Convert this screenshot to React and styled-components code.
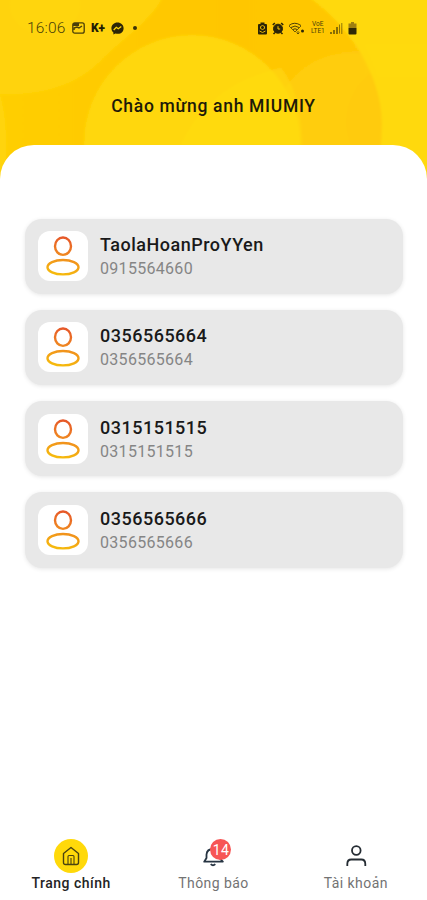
import React from "react";
import styled, { createGlobalStyle } from "styled-components";

const GlobalStyle = createGlobalStyle`
  * {
    box-sizing: border-box;
  }
  body {
    margin: 0;
    background-color: #fff;
    font-family: Roboto, "Noto Sans", sans-serif;
  }
`;
const Container = styled.div`
  display: flex;
  flex-direction: column;
  height: 900px;
  overflow: hidden;
  background-color: #fff;
`;
const Header = styled.header`
  position: relative;
  flex: none;
  height: 180px;
  background-color: #ffd90a;
`;
const Backdrop = styled.svg`
  position: absolute;
  inset: 0;
`;
const StatusBar = styled.div`
  position: relative;
  display: flex;
  align-items: center;
  justify-content: space-between;
  height: 56px;
  padding: 0 70px 0 27px;
  color: #4a3f08;
`;
const StatusGroup = styled.div`
  display: flex;
  align-items: center;
  gap: ${(props) => props.$gap}px;
`;
const Time = styled.span`
  width: 39px;
  font-size: 15.5px;
  font-weight: 300;
  letter-spacing: 0.2px;
  white-space: nowrap;
`;
const Carrier = styled.span`
  width: 14px;
  font-size: 12px;
  font-weight: 900;
  line-height: 12px;
  letter-spacing: -0.2px;
  color: #211c05;
`;
const Dot = styled.span`
  width: 4px;
  height: 4px;
  margin-left: 3px;
  border-radius: 50%;
  background-color: #3b3308;
`;
const Network = styled.span`
  display: flex;
  flex-direction: column;
  align-items: center;
  width: 16px;
  font-size: 6.5px;
  font-weight: 400;
  line-height: 7px;
`;
const Welcome = styled.h1`
  position: relative;
  margin: 38px 0 0;
  font-size: 17.5px;
  font-weight: 500;
  line-height: 24px;
  letter-spacing: 0.7px;
  text-align: center;
  color: #1d1a08;
`;
const Sheet = styled.main`
  position: relative;
  flex: 1;
  margin-top: -35px;
  padding: 73.5px 24px 0 25px;
  border-radius: 34px 34px 0 0;
  background-color: #fff;
`;
const List = styled.div`
  display: flex;
  flex-direction: column;
  gap: 16px;
`;
const Card = styled.div`
  display: flex;
  align-items: center;
  gap: 12px;
  height: 75.3px;
  padding: 0 13px;
  border-radius: 17px;
  background-color: #e8e8e8;
  box-shadow: 0 1px 4px rgba(0, 0, 0, 0.1);
`;
const Avatar = styled.div`
  width: 50px;
  height: 50px;
  border-radius: 12px;
  background-color: #fff;
`;
const Details = styled.div`
  padding-top: 1px;
`;
const Name = styled.div`
  font-size: 18px;
  font-weight: 500;
  line-height: 24px;
  letter-spacing: 0.5px;
  color: #191919;
`;
const Phone = styled.div`
  font-size: 16px;
  line-height: 23px;
  letter-spacing: 0.3px;
  color: #858585;
`;
const TabBar = styled.nav`
  display: flex;
  flex: none;
  height: 63px;
`;
const Tab = styled.div`
  flex: 1;
  display: flex;
  flex-direction: column;
  align-items: center;
  font-size: 14px;
  font-weight: ${(props) => (props.$active ? 500 : 400)};
  line-height: 20px;
  letter-spacing: ${(props) => (props.$active ? 0.5 : 0.45)}px;
  color: ${(props) => (props.$active ? "#242424" : "#737373")};
`;
const TabIcon = styled.div`
  position: relative;
  display: flex;
  align-items: center;
  justify-content: center;
  width: 34px;
  height: 34px;
  margin-top: 2px;
  border-radius: 50%;
  background-color: ${(props) => (props.$active ? "#ffd90a" : "transparent")};
`;
const Badge = styled.span`
  position: absolute;
  top: 0;
  right: -1px;
  width: 21px;
  height: 21px;
  border-radius: 50%;
  background-color: #f75555;
  color: #fff;
  font-size: 14px;
  line-height: 22px;
  letter-spacing: 0.3px;
  text-align: center;
`;

const Bubbles = () => (
  <Backdrop width="427" height="180" viewBox="0 0 427 180">
    <defs>
      <linearGradient id="warm" x1="0" y1="0" x2="1" y2="0">
        <stop offset="0" stopColor="#ffcf05" />
        <stop offset="0.6" stopColor="#ffc605" />
        <stop offset="1" stopColor="#ffc807" />
      </linearGradient>
      <filter id="soft" x="-10%" y="-10%" width="120%" height="120%">
        <feGaussianBlur stdDeviation="1.2" />
      </filter>
    </defs>
    <g filter="url(#soft)">
      <path d="M-10-10H298C345 18 382 72 382 124Q382 155 373 190H-10Z" fill="url(#warm)" />
      <path d="M-10-10H166C155 20 125 36 100 62C72 89 35 97-10 94Z" fill="#ffd307" />
      <ellipse cx="45" cy="5" rx="35" ry="29" fill="#ffd90a" opacity="0.4" />
      <path d="M-10 70Q14 110 3 190H-10Z" fill="#ffd90a" opacity="0.5" />
      <circle cx="350" cy="130" r="77" fill="#ffd60d" opacity="0.4" />
      <circle cx="408" cy="122" r="62" fill="#ffc708" opacity="0.4" />
      <circle cx="192" cy="143" r="108" fill="#ffd708" />
      <path d="M180 145Q210 82 281 68Q301 92 302 145Z" fill="#ffdd12" opacity="0.5" />
      <path d="M437-10H298C345 18 382 72 382 124Q382 155 373 190H437Z" fill="#ffd90a" />
      <path d="M365 45H437V76H378Q373 59 365 45Z" fill="#ffdf12" opacity="0.3" />
    </g>
  </Backdrop>
);

const PictureIcon = () => (
  <svg width="13" height="12" viewBox="0 0 13 12" fill="none" stroke="currentColor">
    <rect x="0.8" y="0.8" width="11.4" height="10.4" rx="2" strokeWidth="1.3" />
    <path d="M2 8V6l3-1 2 1 3-2" strokeWidth="1.5" />
    <path d="M1 1h6v3H1z" fill="currentColor" stroke="none" />
  </svg>
);

const MessengerIcon = () => (
  <svg width="13" height="13" viewBox="0 0 13 13">
    <path d="M6.5.5C3 .5.4 3 .4 6.2c0 1.8.8 3.3 2 4.3v2l2-1c5 1.4 8.2-1.6 8.2-5.3C12.6 3 10 .5 6.5.5Z" fill="#2c2507" />
    <path d="m2.7 8 2.6-2.7 2 1.5 3-2.2" fill="none" stroke="#ffd60a" strokeWidth="1.3" />
  </svg>
);

const SaverIcon = () => (
  <svg width="9" height="13" viewBox="0 0 9 13">
    <path d="M2.5.5h4V2H8q1 0 1 1v8.5q0 1-1 1H1q-1 0-1-1V3q0-1 1-1h1.5z" fill="#2c2507" />
    <path d="M2.5 4.5q2-2 4 0v2q-2 2-4 0ZM1.5 9l3 1.5 3-1.5" fill="none" stroke="#e5b307" />
  </svg>
);

const AlarmIcon = () => (
  <svg width="12" height="13" viewBox="0 0 12 13" fill="none" stroke="#2c2507">
    <circle cx="6" cy="6.7" r="4.5" fill="#2c2507" />
    <path d="m.8 3 2-2m6.4 0 2 2M1.5 12l1.5-1.5m7.5 1.500L9 10.500" strokeWidth="1.6" />
    <path d="M6 4.2V7h2.2" stroke="#ffca07" />
  </svg>
);

const WifiIcon = () => (
  <svg width="17" height="13" viewBox="0 0 17 13" fill="none" stroke="currentColor">
    <path d="M1 3.5q5.5-4.5 12 0M3 5.5q4-3 8 0M5 7.5q2-1.5 4 0" />
    <path d="m1 4 6 6 6-6M10 9v3m-1.5-1.5L10 12l1.5-1.5" strokeWidth="0.8" />
    <circle cx="14.5" cy="9" r="1.5" fill="#2c2507" stroke="none" />
  </svg>
);

const SignalIcon = () => (
  <svg width="13" height="12" viewBox="0 0 13 12" fill="none" stroke="currentColor">
    <path d="M1 10v2M4 8v4M7 5v7" strokeWidth="1.3" />
    <path d="M9.5 2.5v9M11.8 1v11" strokeWidth="0.9" opacity="0.7" />
  </svg>
);

const BatteryIcon = () => (
  <svg width="9" height="13" viewBox="0 0 9 13">
    <path d="M3 0h3v1.5h2.5V6h-8V1.5H3z" fill="#a08010" />
    <path d="M.5 6h8v5.5q0 1-1 1h-6q-1 0-1-1z" fill="#302907" />
  </svg>
);

const PersonIcon = () => (
  <svg width="50" height="50" viewBox="0 0 50 50" fill="none" strokeWidth="2.4">
    <defs>
      <linearGradient id="person" gradientUnits="userSpaceOnUse" x1="29" y1="5" x2="22" y2="45">
        <stop offset="0" stopColor="#e5532a" />
        <stop offset="0.5" stopColor="#f08a20" />
        <stop offset="1" stopColor="#f6bd0b" />
      </linearGradient>
    </defs>
    <ellipse cx="25" cy="15.2" rx="8" ry="8.7" stroke="url(#person)" />
    <ellipse cx="25" cy="36.2" rx="15.5" ry="7.2" stroke="url(#person)" />
  </svg>
);

const HomeIcon = () => (
  <svg width="18" height="20" viewBox="0 0 18 20" fill="none" stroke="#4a4310" strokeWidth="1.4">
    <path d="M1.500 7.500 9 1.500l7.500 6v9q0 2-2 2h-11q-2 0-2-2Z" strokeLinejoin="round" />
    <path d="M6 18v-7.500q0-1 1-1h4q1 0 1 1V18M9 12v6" strokeWidth="1.1" />
  </svg>
);

const BellIcon = () => (
  <svg width="22" height="22" viewBox="0 0 22 22" fill="none" stroke="#263442" strokeWidth="1.8">
    <path d="M2.200 16.700 4.500 13V9.500Q5 4 11 4q6 0 6.500 5.500V13l3.300 3.700Z" strokeLinejoin="round" />
    <path d="M8.700 19.200q2.300 2.300 4.600 0" />
  </svg>
);

const AccountIcon = () => (
  <svg width="22" height="24" viewBox="0 0 22 24" fill="none" stroke="#252c33" strokeWidth="1.8">
    <circle cx="11.3" cy="6.5" r="4.3" />
    <path d="M2.3 22v-2q0-4.500 4-4.500h10q4 0 4 4.500v2" />
  </svg>
);

const contacts = [
  { name: "TaolaHoanProYYen", phone: "0915564660" },
  { name: "0356565664", phone: "0356565664" },
  { name: "0315151515", phone: "0315151515" },
  { name: "0356565666", phone: "0356565666" },
];

const App = () => {
  return (
    <Container>
      <GlobalStyle />
      <Header>
        <Bubbles />
        <StatusBar>
          <StatusGroup $gap={6}>
            <Time>16:06</Time>
            <PictureIcon />
            <Carrier>K+</Carrier>
            <MessengerIcon />
            <Dot />
          </StatusGroup>
          <StatusGroup $gap={4.6}>
            <SaverIcon />
            <AlarmIcon />
            <WifiIcon />
            <Network>
              <span>VoE</span>
              <span>LTE1</span>
            </Network>
            <SignalIcon />
            <BatteryIcon />
          </StatusGroup>
        </StatusBar>
        <Welcome>Chào mừng anh MIUMIY</Welcome>
      </Header>
      <Sheet>
        <List>
          {contacts.map((contact) => (
            <Card key={contact.name}>
              <Avatar>
                <PersonIcon />
              </Avatar>
              <Details>
                <Name>{contact.name}</Name>
                <Phone>{contact.phone}</Phone>
              </Details>
            </Card>
          ))}
        </List>
      </Sheet>
      <TabBar>
        <Tab $active>
          <TabIcon $active>
            <HomeIcon />
          </TabIcon>
          Trang chính
        </Tab>
        <Tab>
          <TabIcon>
            <BellIcon />
            <Badge>14</Badge>
          </TabIcon>
          Thông báo
        </Tab>
        <Tab>
          <TabIcon>
            <AccountIcon />
          </TabIcon>
          Tài khoản
        </Tab>
      </TabBar>
    </Container>
  );
};

export default App;
